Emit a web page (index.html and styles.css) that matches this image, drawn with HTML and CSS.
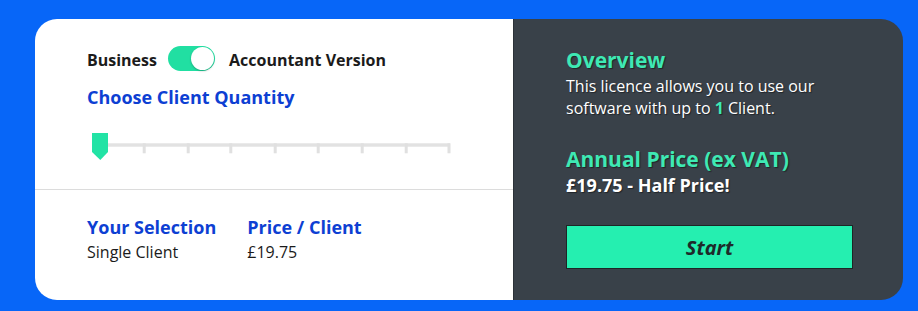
FILE: index.html
```html
<!DOCTYPE html>
<html lang="en">
<head>
<meta charset="utf-8">
<title>Pricing</title>
<link rel="stylesheet" href="styles.css">
</head>
<body>
<div class="card">
  <div class="config">
    <div class="config-top">
      <div class="version-row">
        <span class="label">Business</span>
        <span class="toggle"><span class="knob"></span></span>
        <span class="label">Accountant Version</span>
      </div>
      <h2 class="heading">Choose Client Quantity</h2>
      <svg class="slider" width="366" height="32" viewBox="0 0 366 32">
        <rect x="12" y="13.3" width="350" height="3.4" fill="#e2e2e2"/>
        <rect x="54.7" y="13.3" width="3" height="10" fill="#e0e0e0"/>
        <rect x="98.7" y="13.3" width="3" height="10" fill="#e0e0e0"/>
        <rect x="141.3" y="13.3" width="3" height="10" fill="#e0e0e0"/>
        <rect x="185.7" y="13.3" width="3" height="10" fill="#e0e0e0"/>
        <rect x="228.7" y="13.3" width="3" height="10" fill="#e0e0e0"/>
        <rect x="272.7" y="13.3" width="3" height="10" fill="#e0e0e0"/>
        <rect x="316.7" y="13.3" width="3" height="10" fill="#e0e0e0"/>
        <rect x="359.5" y="13.3" width="3" height="10" fill="#e0e0e0"/>
        <polygon points="4,3 20,3 20,22 12.3,30 4,22" fill="#22e3a5"/>
      </svg>
    </div>
    <div class="config-bottom">
      <div class="summary">
        <div class="summary-col">
          <h3 class="heading">Your Selection</h3>
          <div class="value">Single Client</div>
        </div>
        <div class="summary-col">
          <h3 class="heading">Price / Client</h3>
          <div class="value">£19.75</div>
        </div>
      </div>
    </div>
  </div>
  <div class="overview">
    <h2 class="ov-title">Overview</h2>
    <p class="ov-text">This licence allows you to use our software with up to <strong class="accent">1</strong> Client.</p>
    <h2 class="ov-title price-title">Annual Price (ex VAT)</h2>
    <div class="ov-price">£19.75 - Half Price!</div>
    <button class="start-btn">Start</button>
  </div>
</div>
</body>
</html>
```
FILE: styles.css
```css
* { box-sizing: border-box; }

body {
  margin: 0;
  background: #0766f8;
  font-family: "Open Sans", "Liberation Sans", sans-serif;
  width: 918px;
  height: 311px;
  overflow: hidden;
}

.card {
  margin: 19px 0 0 35px;
  width: 868px;
  height: 281px;
  display: flex;
  border-radius: 22px;
  overflow: hidden;
}

.config {
  width: 478px;
  background: #ffffff;
  display: flex;
  flex-direction: column;
}

.config-top {
  height: 171px;
  padding: 27px 0 0 52px;
  border-bottom: 1px solid #dcdcdc;
}

.version-row {
  display: flex;
  align-items: center;
  height: 25px;
}

.label {
  font-size: 16px;
  font-weight: 700;
  color: #1b1b1b;
  line-height: 22px;
  padding-top: 2px;
}

.toggle {
  position: relative;
  width: 47px;
  height: 25px;
  border-radius: 13px;
  background: #21dfa2;
  margin: 0 14px 0 11px;
}

.knob {
  position: absolute;
  top: 1px;
  right: 1px;
  width: 23px;
  height: 23px;
  border-radius: 50%;
  background: #ffffff;
  box-shadow: 0 1px 2px rgba(0, 0, 0, 0.25);
}

.heading {
  margin: 0;
  font-size: 18px;
  font-weight: 700;
  line-height: 24px;
  color: #0d3fd3;
}

.config-top .heading {
  margin-top: 14px;
}

.slider {
  display: block;
  margin-top: 21px;
  margin-left: 1px;
}

.config-bottom {
  flex: 1;
  padding: 25px 0 0 52px;
}

.summary {
  display: flex;
  gap: 31px;
}

.value {
  margin-top: 2px;
  font-size: 16px;
  line-height: 22px;
  color: #1b1b1b;
}

.overview {
  flex: 1;
  background: #394149;
  padding: 28px 0 0 52px;
  border-left: 1px solid #2c3238;
}

.ov-title {
  margin: 0;
  font-size: 21px;
  font-weight: 700;
  line-height: 26px;
  color: #3ee9b4;
  text-shadow: 1px 1px 1px rgba(0, 0, 0, 0.45);
}

.ov-text {
  margin: 2px 0 0;
  max-width: 265px;
  font-size: 16px;
  line-height: 22px;
  color: #ffffff;
  text-shadow: 1px 1px 1px rgba(0, 0, 0, 0.45);
}

.accent {
  color: #3ee9b4;
  font-weight: 700;
}

.price-title {
  margin-top: 27px;
}

.ov-price {
  margin-top: 1px;
  font-size: 18px;
  font-weight: 700;
  line-height: 24px;
  color: #ffffff;
  text-shadow: 1px 1px 1px rgba(0, 0, 0, 0.45);
}

.start-btn {
  display: block;
  margin-top: 28px;
  width: 287px;
  height: 44px;
  background: #25efb0;
  border: 1px solid #1e2626;
  font-family: "Open Sans", "Liberation Sans", sans-serif;
  font-size: 20px;
  font-weight: 700;
  font-style: italic;
  color: #1e2a2a;
  padding: 0;
}
```
